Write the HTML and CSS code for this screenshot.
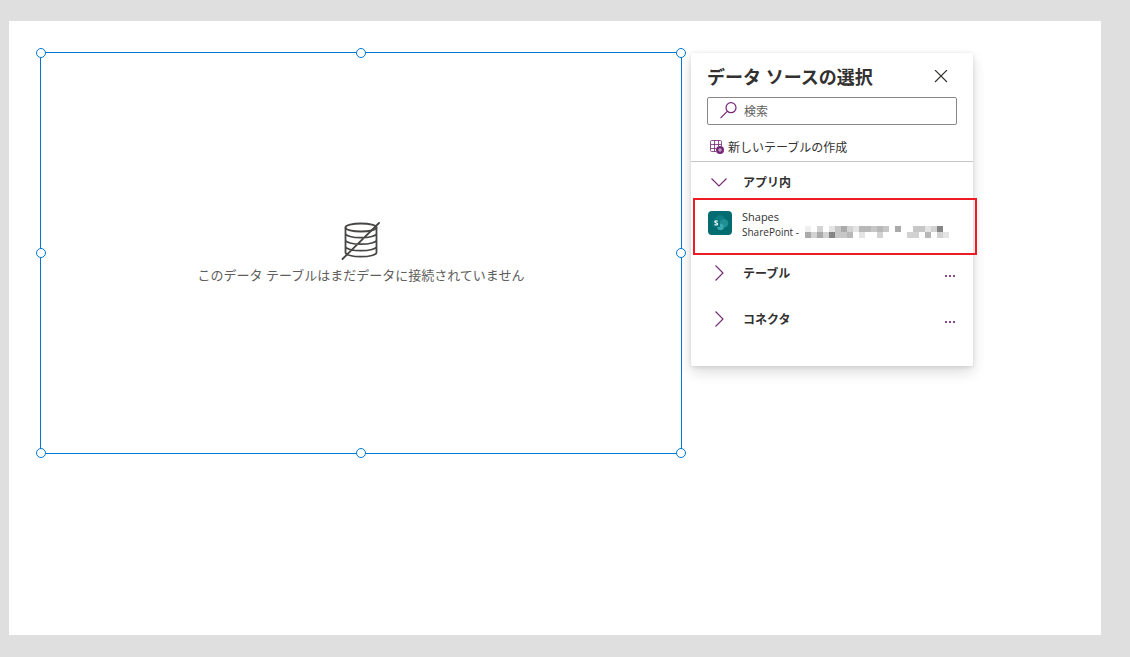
FILE: index.html
```html
<!DOCTYPE html>
<html lang="ja">
<head>
<meta charset="utf-8">
<title>データ ソースの選択</title>
<link rel="stylesheet" href="styles.css">
</head>
<body>
<main class="canvas">
  <section class="data-table">
    <svg class="db-icon" width="40" height="40" viewBox="0 0 40 40" fill="none" stroke="#484644" stroke-width="1.8" stroke-linecap="round" aria-hidden="true">
      <ellipse cx="20" cy="6.500" rx="15.500" ry="4"/>
      <path d="M4.500 6.500v25c0 2.400 7 4.200 15.500 4.200s15.500-1.800 15.500-4.200v-25M4.500 12.500c0 2.400 7 4.200 15.500 4.200s15.500-1.800 15.500-4.200M4.500 19c0 2.400 7 4.200 15.500 4.200s15.500-1.800 15.500-4.200M4.500 25.500c0 2.400 7 4.200 15.500 4.200s15.500-1.800 15.500-4.200M1.500 38 38 2"/>
    </svg>
    <p class="empty-text">このデータ テーブルはまだデータに接続されていません</p>
    <span class="handle top left"></span>
    <span class="handle top center"></span>
    <span class="handle top right"></span>
    <span class="handle middle left"></span>
    <span class="handle middle right"></span>
    <span class="handle bottom left"></span>
    <span class="handle bottom center"></span>
    <span class="handle bottom right"></span>
  </section>

  <aside class="panel">
    <header class="panel-head">
      <h1 class="title">データ ソースの選択</h1>
      <button class="icon-button" type="button" aria-label="閉じる">
        <svg width="14" height="14" viewBox="0 0 14 14" fill="none" stroke="#323130" stroke-width="1.1"><path d="M1 0l12 12M13 0L1 12"/></svg>
      </button>
    </header>
    <label class="search">
      <svg width="18" height="18" viewBox="0 0 18 18" fill="none" stroke="#742774" stroke-width="1.2" aria-hidden="true"><circle cx="11" cy="5.700" r="5"/><path d="M7.500 9.200l-7 7"/></svg>
      <input class="search-input" type="search" placeholder="検索" aria-label="検索">
    </label>
    <button class="create" type="button">
      <svg width="14" height="14" viewBox="0 0 14 14" fill="none" stroke="#742774" aria-hidden="true"><path d="M6 11.500H1.500a1 1 0 0 1-1-1v-9a1 1 0 0 1 1-1h9a1 1 0 0 1 1 1V6M4.500.5v11M8.500.5V6M.5 4.500h11M.5 8.500H6" stroke-width=".8"/><circle cx="10" cy="10" r="4" fill="#742774" stroke="none"/><path d="M10 8v4M8 10h4" stroke="#e3d0e3" stroke-width=".9"/></svg>
      <span class="label">新しいテーブルの作成</span>
    </button>
    <div class="group">
      <button class="group-toggle" type="button" aria-expanded="true">
        <svg width="18" height="18" viewBox="0 0 18 18" fill="none" stroke="#742774" stroke-width="1.1" aria-hidden="true"><path d="M1.500 5.500 9 13l7.500-7.500"/></svg>
        <span class="label">アプリ内</span>
      </button>
    </div>
    <button class="source" type="button">
      <svg width="24" height="24" viewBox="0 0 24 24" aria-hidden="true">
        <rect width="24" height="24" rx="4" fill="#036c70"/>
        <circle cx="12" cy="9" r="4.800" fill="#0d7d81"/>
        <circle cx="16" cy="12.300" r="4.300" fill="#1f8f94"/>
        <circle cx="12.500" cy="16" r="3.300" fill="#37a9ae"/>
        <rect x="4.500" y="8" width="7.500" height="8" rx="1" fill="#04767a"/>
        <path d="M9.700 10.300C8.700 9.600 6.800 9.600 6.800 10.800c0 1.300 2.800.8 2.800 2.200 0 1.300-2.100 1.200-3.100.5" fill="none" stroke="#fff" stroke-width="1.200"/>
      </svg>
      <span class="source-text">
        <span class="source-name">Shapes</span>
        <span class="source-detail">SharePoint -
          <svg class="redacted" width="144" height="12" viewBox="0 0 24 2" shape-rendering="crispEdges" aria-hidden="true">
            <path fill="#efefef" d="M0 0h1v1H0z"/>
            <path fill="#e4e4e4" d="M4 0h1v1H4zM8 0h1v1H8zM20 0h1v1h-1zM9 1h1v1H9zM23 1h1v1h-1z"/>
            <path fill="#d2d2d2" d="M2 0h1v1H2zM7 0h1v1H7zM21 0h1v1h-1zM1 1h1v1H1zM3 1h1v1H3zM12 1h1v1h-1zM17 1h2v1h-2zM22 1h1v1h-1z"/>
            <path fill="#c7c7c7" d="M5 0h1v1H5zM11 0h1v1h-1zM13 0h1v1h-1zM18 0h2v1h-2zM5 1h2v1H5z"/>
            <path fill="#b8b8b8" d="M9 0h2v1H9zM12 0h1v1h-1zM7 1h1v1H7zM20 1h1v1h-1z"/>
            <path fill="#aaaaaa" d="M6 0h1v1H6zM15 0h1v1h-1zM0 1h1v1H0zM2 1h1v1H2z"/>
            <path fill="#858585" d="M22 0h1v1h-1zM4 1h1v1H4z"/>
          </svg>
        </span>
      </span>
    </button>
    <div class="group">
      <button class="group-toggle" type="button" aria-expanded="false">
        <svg width="18" height="18" viewBox="0 0 18 18" fill="none" stroke="#742774" stroke-width="1.1" aria-hidden="true"><path d="M5.500.5 13 8l-7.500 7.500"/></svg>
        <span>テーブル</span>
      </button>
      <button class="icon-button more" type="button" aria-label="その他"><svg width="10" height="2" viewBox="0 0 10 2" fill="#8a4a8a"><path d="M0 0h2v2H0zM4 0h2v2H4zM8 0h2v2H8z"/></svg></button>
    </div>
    <div class="group">
      <button class="group-toggle" type="button" aria-expanded="false">
        <svg width="18" height="18" viewBox="0 0 18 18" fill="none" stroke="#742774" stroke-width="1.1" aria-hidden="true"><path d="M5.500.5 13 8l-7.500 7.500"/></svg>
        <span>コネクタ</span>
      </button>
      <button class="icon-button more" type="button" aria-label="その他"><svg width="10" height="2" viewBox="0 0 10 2" fill="#8a4a8a"><path d="M0 0h2v2H0zM4 0h2v2H4zM8 0h2v2H8z"/></svg></button>
    </div>
  </aside>
</main>
</body>
</html>
```
FILE: styles.css
```css
* {
  box-sizing: border-box;
}

body {
  margin: 0;
  min-height: 100vh;
  display: flex;
  padding: 21px 29px 22px 9px;
  background: #dfdfdf;
  color: #323130;
  font-family: "Open Sans", "Noto Sans CJK JP", sans-serif;
  font-size: 12px;
  line-height: 16px;
}

button {
  display: flex;
  align-items: center;
  margin: 0;
  padding: 0;
  border: 0;
  background: none;
  color: inherit;
  font: inherit;
  text-align: left;
  cursor: pointer;
}

svg {
  display: block;
  flex: none;
}

.canvas {
  position: relative;
  flex: 1;
  background: #fff;
}

/* Selected control on the free canvas */
.data-table {
  position: absolute;
  left: 31px;
  top: 31px;
  width: 642px;
  height: 402px;
  display: flex;
  flex-direction: column;
  align-items: center;
  justify-content: center;
  gap: 4px;
  border: 1px solid #0078d4;
}

.empty-text {
  margin: 0;
  color: #605e5c;
  font-size: 13px;
  line-height: 20px;
}

.handle {
  position: absolute;
  width: 10px;
  height: 10px;
  border: 1px solid #0078d4;
  border-radius: 50%;
  background: #fff;
}

.top { top: -5px; }
.middle { top: calc(50% - 5px); }
.bottom { bottom: -5px; }
.left { left: -5px; }
.center { left: calc(50% - 5px); }
.right { right: -5px; }

/* Data source flyout */
.panel {
  position: absolute;
  left: 682px;
  top: 32px;
  width: 282px;
  padding-bottom: 23px;
  border-radius: 2px;
  background: #fff;
  box-shadow: 0 6px 14px rgba(0, 0, 0, 0.14), 0 1px 4px rgba(0, 0, 0, 0.11);
}

.panel-head {
  display: flex;
  align-items: center;
  justify-content: space-between;
  padding: 8px 16px 4px;
}

.title {
  margin: 0;
  font-size: 18px;
  font-weight: 700;
  line-height: 32px;
}

.icon-button {
  justify-content: center;
  width: 32px;
  height: 30px;
}

.more {
  padding-top: 4px;
}

.label {
  padding-top: 2px;
}

.search {
  display: flex;
  align-items: center;
  gap: 6px;
  height: 28px;
  margin: 0 16px;
  padding: 0 12px;
  border: 1px solid #8a8886;
  border-radius: 2px;
}

.search-input {
  flex: 1;
  min-width: 0;
  padding: 2px 0 0;
  border: 0;
  outline: 0;
  background: none;
  color: inherit;
  font: inherit;
}

.search-input::placeholder {
  color: #605e5c;
}

.create {
  gap: 4px;
  width: 100%;
  height: 37px;
  padding: 8px 19px 0;
  border-bottom: 1px solid #c8c6c4;
}

.group {
  display: flex;
  align-items: center;
  height: 46px;
  padding: 0 7px 0 19px;
}

.create + .group {
  height: 40px;
}

.group-toggle {
  flex: 1;
  gap: 15px;
  height: 100%;
  font-weight: 700;
}

.source {
  align-items: flex-start;
  gap: 10px;
  width: 284px;
  height: 57px;
  margin: -4px 0 -4px 2px;
  padding: 10px 13px;
  border: 2px solid #ed1c24;
  position: relative;
}

.source > svg {
  margin-top: 1px;
}

.source-text {
  display: flex;
  flex-direction: column;
}

.source-name {
  font-size: 11px;
  line-height: 14px;
}

.source-detail {
  display: flex;
  align-items: center;
  gap: 6px;
  font-size: 10px;
  line-height: 16px;
}
```
